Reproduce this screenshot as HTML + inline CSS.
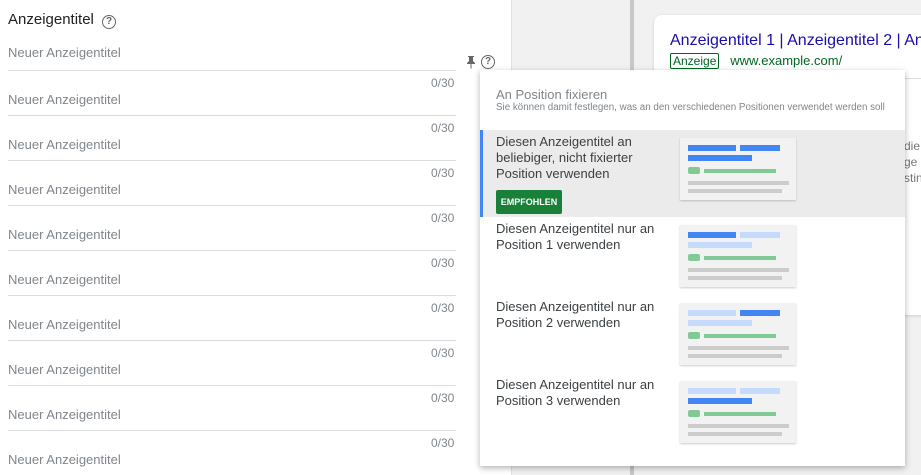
<!DOCTYPE html>
<html><head><meta charset="utf-8"><style>
*{margin:0;padding:0;box-sizing:border-box}
body{width:921px;height:475px;overflow:hidden;position:relative;font-family:"Liberation Sans",Arial,sans-serif;background:#f1f1f1}
.left{position:absolute;left:0;top:0;width:512px;height:475px;background:#fff;border-right:1px solid #e0e0e0}
.title{position:absolute;left:8px;top:11px;font-size:15px;color:#202124}
.q{display:inline-block;width:14px;height:14px;border:1.3px solid #666;border-radius:50%;font-size:10px;text-align:center;line-height:12px;color:#666;vertical-align:0px;margin-left:4px;font-weight:bold}
.ph{position:absolute;left:8px;font-size:13px;color:#80868b}
.ln{position:absolute;left:8px;width:448px;height:1px;background:#dadce0}
.cnt{position:absolute;left:431px;font-size:12px;color:#80868b}
.bar{position:absolute;left:630px;top:0;width:4px;height:475px;background:#c8c8c8}
.card{position:absolute;left:654px;top:15px;width:300px;height:300px;background:#fff;border-radius:8px;box-shadow:0 1px 3px rgba(0,0,0,.15)}
.pop{position:absolute;left:480px;top:70px;width:425px;height:396px;background:#fff;box-shadow:0 2px 6px rgba(0,0,0,.3)}
.row{position:absolute;left:0;width:425px}
.rt{position:absolute;left:16px;top:4px;font-size:13px;line-height:16px;color:#3c4043;width:170px}
.th{position:absolute;left:200px;width:116px;height:62px;background:#f2f2f2;box-shadow:0 1px 2px rgba(0,0,0,.2)}
.th i{position:absolute;display:block}
</style></head><body>
<div class="left">
<div class="title">Anzeigentitel <span class="q">?</span></div>
<div class="ph" style="top:45px">Neuer Anzeigentitel</div>
<div class="ln" style="top:70px"></div>
<div class="cnt" style="top:76px">0/30</div><div class="ph" style="top:92px">Neuer Anzeigentitel</div><div class="ln" style="top:115px"></div>
<div class="cnt" style="top:121px">0/30</div><div class="ph" style="top:137px">Neuer Anzeigentitel</div><div class="ln" style="top:160px"></div>
<div class="cnt" style="top:166px">0/30</div><div class="ph" style="top:182px">Neuer Anzeigentitel</div><div class="ln" style="top:205px"></div>
<div class="cnt" style="top:211px">0/30</div><div class="ph" style="top:227px">Neuer Anzeigentitel</div><div class="ln" style="top:250px"></div>
<div class="cnt" style="top:256px">0/30</div><div class="ph" style="top:272px">Neuer Anzeigentitel</div><div class="ln" style="top:295px"></div>
<div class="cnt" style="top:301px">0/30</div><div class="ph" style="top:317px">Neuer Anzeigentitel</div><div class="ln" style="top:340px"></div>
<div class="cnt" style="top:346px">0/30</div><div class="ph" style="top:362px">Neuer Anzeigentitel</div><div class="ln" style="top:385px"></div>
<div class="cnt" style="top:391px">0/30</div><div class="ph" style="top:407px">Neuer Anzeigentitel</div><div class="ln" style="top:430px"></div>
<div class="cnt" style="top:436px">0/30</div><div class="ph" style="top:452px">Neuer Anzeigentitel</div>
<svg style="position:absolute;left:466px;top:55px" width="10" height="14" viewBox="0 0 10 14"><path d="M2 1h6v1H7v4l2 2v1H5.5v4.5h-1V9H1V8l2-2V2H2z" fill="#666"/></svg>
<span class="q" style="position:absolute;left:481px;top:55px;margin:0">?</span>
</div>
<div class="bar"></div>
<div class="card">
<div style="position:absolute;left:16px;top:17px;font-size:16px;color:#1a0dab;white-space:nowrap">Anzeigentitel 1 | Anzeigentitel 2 | An</div>
<div style="position:absolute;left:16px;top:38px;font-size:13px;color:#006621;white-space:nowrap"><span style="border:1px solid #006621;border-radius:2px;padding:0 2px;font-size:12px">Anzeige</span>&nbsp;&nbsp;&nbsp;www.example.com/</div>
<div style="position:absolute;left:0;top:63px;width:300px;height:1px;background:#e0e0e0"></div>
</div>
<div style="position:absolute;left:904px;top:138px;font-size:12px;line-height:16px;color:#777">die<br>ge<br>stin</div>
<div class="pop">
<div style="position:absolute;left:16px;top:17px;font-size:13px;color:#80868b">An Position fixieren</div>
<div style="position:absolute;left:16px;top:32px;font-size:9.8px;color:#80868b;white-space:nowrap">Sie können damit festlegen, was an den verschiedenen Positionen verwendet werden soll</div>
<div class="row" style="top:60px;height:87px;background:#ebebeb;border-left:3px solid #4285f4">
<div class="rt" style="left:13px">Diesen Anzeigentitel an beliebiger, nicht fixierter Position verwenden</div>
<div style="position:absolute;left:13px;top:60px;width:66px;height:24px;background:#188038;border-radius:2px;color:#fff;font-size:9px;font-weight:bold;line-height:24px;text-align:center">EMPFOHLEN</div>
<div class="th" style="left:197px;top:8px"><i style="left:8px;top:7px;width:48px;height:6px;background:#4285f4"></i><i style="left:60px;top:7px;width:40px;height:6px;background:#4285f4"></i><i style="left:8px;top:17px;width:64px;height:6px;background:#4285f4"></i><i style="left:8px;top:29px;width:12px;height:7px;background:#81c995;border-radius:2px"></i><i style="left:24px;top:31px;width:72px;height:4px;background:#81c995"></i><i style="left:8px;top:43px;width:101px;height:4px;background:#ccc"></i><i style="left:8px;top:51px;width:94px;height:4px;background:#ccc"></i></div>
</div>
<div class="row" style="top:147px;height:78px"><div class="rt">Diesen Anzeigentitel nur an Position 1 verwenden</div>
<div class="th" style="top:8px"><i style="left:8px;top:7px;width:48px;height:6px;background:#4285f4"></i><i style="left:60px;top:7px;width:40px;height:6px;background:#c6dafc"></i><i style="left:8px;top:17px;width:64px;height:6px;background:#c6dafc"></i><i style="left:8px;top:29px;width:12px;height:7px;background:#81c995;border-radius:2px"></i><i style="left:24px;top:31px;width:72px;height:4px;background:#81c995"></i><i style="left:8px;top:43px;width:101px;height:4px;background:#ccc"></i><i style="left:8px;top:51px;width:94px;height:4px;background:#ccc"></i></div></div>
<div class="row" style="top:225px;height:78px"><div class="rt">Diesen Anzeigentitel nur an Position 2 verwenden</div>
<div class="th" style="top:8px"><i style="left:8px;top:7px;width:48px;height:6px;background:#c6dafc"></i><i style="left:60px;top:7px;width:40px;height:6px;background:#4285f4"></i><i style="left:8px;top:17px;width:64px;height:6px;background:#c6dafc"></i><i style="left:8px;top:29px;width:12px;height:7px;background:#81c995;border-radius:2px"></i><i style="left:24px;top:31px;width:72px;height:4px;background:#81c995"></i><i style="left:8px;top:43px;width:101px;height:4px;background:#ccc"></i><i style="left:8px;top:51px;width:94px;height:4px;background:#ccc"></i></div></div>
<div class="row" style="top:303px;height:78px"><div class="rt">Diesen Anzeigentitel nur an Position 3 verwenden</div>
<div class="th" style="top:8px"><i style="left:8px;top:7px;width:48px;height:6px;background:#c6dafc"></i><i style="left:60px;top:7px;width:40px;height:6px;background:#c6dafc"></i><i style="left:8px;top:17px;width:64px;height:6px;background:#4285f4"></i><i style="left:8px;top:29px;width:12px;height:7px;background:#81c995;border-radius:2px"></i><i style="left:24px;top:31px;width:72px;height:4px;background:#81c995"></i><i style="left:8px;top:43px;width:101px;height:4px;background:#ccc"></i><i style="left:8px;top:51px;width:94px;height:4px;background:#ccc"></i></div></div>
</div>
</body></html>
